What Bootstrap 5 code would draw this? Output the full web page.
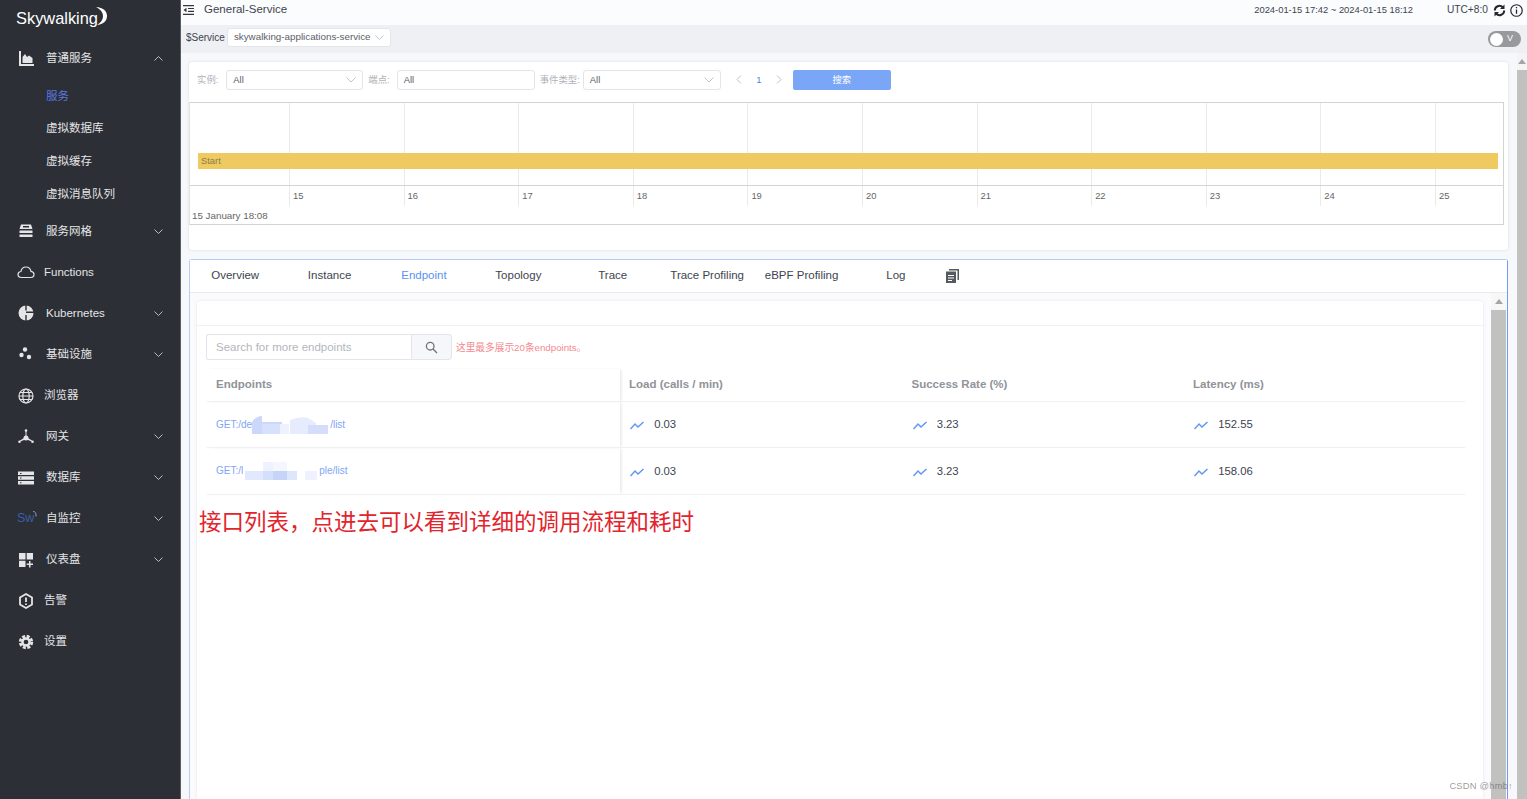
<!DOCTYPE html>
<html lang="zh-CN">
  <head>
    <meta charset="UTF-8" />
    <meta name="viewport" content="width=device-width, initial-scale=1.0" />
    <title>Skywalking</title>
    <link
      href="https://cdn.jsdelivr.net/npm/bootstrap@5.3.0/dist/css/bootstrap.min.css"
      rel="stylesheet"
    />
    <style>
      html, body { height: 100%; overflow: hidden; }
      body {
        font-family: "Liberation Sans", "Noto Sans CJK SC", sans-serif;
        font-size: 12px;
        color: #3d444f;
        background: #f7f8fb;
      }
      .sidebar { width: 181px; flex: none; background: #2c2f35; color: #e4e5e7; border-right: 1px solid #5a5d62; font-size: 11.5px; }
      .logo { height: 38px; padding-left: 16px; font-size: 16.4px; line-height: 36px; color: #fff; white-space: nowrap; }
      .logo svg { vertical-align: top; margin: 7px 0 0 -3px; }
      .menu-item { height: 41.05px; flex: none; padding-left: 18px; padding-right: 17px; color: #e4e5e7; }
      .menu-item .ico { width: 16px; height: 16px; flex: none; margin-right: 12px; }
      .menu-item.leaf { padding-left: 17px; }
      .menu-item.leaf .ico { width: 18px; margin-right: 9px; }
      .menu-item .chev { margin-left: auto; }
      .sub-item { height: 32.7px; flex: none; padding-left: 46px; color: #e4e5e7; }
      .sub-item.active { color: #5a78e0; margin-top: 1px; }
      .sw-ico { color: #3a5ea8; font-size: 12.5px; width: 17px; margin-right: 12px; margin-left: -1px; white-space: nowrap; }
      .sw-ico svg { vertical-align: 5px; margin-left: -1px; }

      .topbar { height: 25px; background: #fbfcfd; padding: 0 4px 5px 2px; color: #3d444f; font-size: 11.5px; }
      .topbar .date { font-size: 9.4px; margin-right: 34px; }
      .topbar .utc { font-size: 10.2px; margin-right: 5px; }
      .title { margin-left: 10px; }
      .toolbar { height: 28px; background: #eef0f3; padding: 0 6px 3px 5px; font-size: 10px; }
      .ms-select { background: #fff; border: 1px solid #e3e5ea; border-radius: 3px; font-size: 9.4px; color: #5b6068; padding: 0 6px; height: 20px; }
      .svc-select { width: 164px; height: 19px; margin-left: 2px; font-size: 9.8px; }
      .switch-v { width: 33px; height: 16px; border-radius: 8px; background: #97999c; color: #fff; font-size: 9px; padding: 0 8px 0 2px; margin-top: 3px; }
      .switch-v i { width: 13px; height: 13px; border-radius: 50%; background: #fff; display: block; }

      .content { padding: 9px 9px 0 8px; min-width: 0; }
      .pane { background: #fff; border: 0; border-radius: 3px; box-shadow: 0 0 3px rgba(0,0,0,.12); }
      .filters { height: 40px; padding: 0 8px 4px; font-size: 9.4px; color: #b0b3b8; }
      .filters .lbl { margin-right: 8px; white-space: nowrap; }
      .filters .lbl.type { margin-left: 5px; margin-right: 3px; }
      .filters .lbl.point { margin-left: 5px; margin-right: 7px; }
      .w-137 { width: 137px; }
      .w-138 { width: 138px; }
      .pager { width: 61px; padding-left: 15px; color: #b8bbc0; font-size: 11px; }
      .pager b { font-weight: 400; color: #4d82ee; font-size: 9.4px; }
      .btn-search { width: 98px; height: 20px; padding: 0; background: #79a6f7; color: #fff; font-size: 9.4px; border: 0; border-radius: 2px; margin-left: 11px; }
      .btn-search:hover { background: #79a6f7; color: #fff; }

      .timeline { position: relative; height: 123px; margin-right: 4px; border: 1px solid #d3d3d3; border-left-color: #e4e4e4; margin-bottom: 25px; font-size: 9.4px; color: #666; }
      .tl-grid { height: 83px; padding-left: 99px; border-bottom: 1px solid #d3d3d3; }
      .tl-grid span, .tl-axis span { width: 114.6px; flex: none; border-left: 1px solid #eaeaea; }
      .tl-axis { height: 20px; padding-left: 99px; }
      .tl-axis span { padding: 3px 0 0 3px; }
      .tl-date { padding: 3px 0 0 2px; font-size: 9.8px; }
      .tl-bar { position: absolute; left: 8px; right: 5px; top: 50px; height: 16px; background: #efca60; color: #8b7c4c; padding-left: 3px; line-height: 15px; }

      .tabs-pane { border: 1px solid #b5cdf8; border-right-color: #6f9cf0; border-bottom: 0; border-radius: 3px 3px 0 0; background: #f8f9fc; margin-top: 9px; min-height: 0; }
      .ms-tabs { height: 33px; background: #fff; border-bottom: 1px solid #e8eaed; flex: none; font-size: 11.5px; padding: 0 0 1px 0; }
      .ms-tabs .nav-item:first-child { margin-left: -2px; }
      .ms-tabs .nav-link { width: 94.4px; padding: 0; text-align: center; color: #3d444f; white-space: nowrap; }
      .ms-tabs .nav-link.active { color: #5b92f3; }
      .tab-icon { margin: 0 0 0 3px; }
      .tab-body { padding: 8px 7px 0 7px; min-height: 0; background: #fbfbfd; }
      .inner { width: 1286px; flex: none; background: #fff; border-radius: 3px 3px 0 0; box-shadow: 0 0 3px rgba(0,0,0,.1); }
      .inner-head { height: 25px; flex: none; border-bottom: 1px solid #eef0f2; }
      .search-row { padding: 8px 0 0 9px; height: 43px; flex: none; }
      .search-box { width: 205px; height: 26px; border: 1px solid #e3e5ea; border-right: 0; border-radius: 3px 0 0 3px; padding: 0 9px; color: #b3b6bc; font-size: 11.5px; line-height: 24px; background: #fff; white-space: nowrap; }
      .search-btn { width: 41px; height: 26px; border: 1px solid #e3e5ea; border-radius: 0 3px 3px 0; background: #f5f7fa; }
      .search-tip { color: #f48a8f; font-size: 9.7px; margin-left: 4px; line-height: 28px; }

      .ep-table { margin: 0 0 0 10px; width: 1258px; table-layout: fixed; font-size: 11.3px; color: #3d444f; }
      .ep-table th, .ep-table td { padding: 0 9px; vertical-align: middle; border-bottom: 1px solid #eef0f2; background: transparent; box-shadow: none; }
      .ep-table th { height: 32.5px; color: #909399; font-weight: 700; font-size: 11.5px; }
      .ep-table td { height: 46.4px; }
      .ep-table .first { width: 413px; box-shadow: 2px 0 3px -1px rgba(0,0,0,.12); }
      .ep-table .col-load { width: 282.5px; }
      .ep-table .col-rate { width: 281.5px; }
      .ep-link { color: #7fa5f6; font-size: 10px; white-space: nowrap; }
      .ep-link svg { vertical-align: middle; }
      .val svg { margin: 0 7px 0 1px; vertical-align: -2px; }
      .note { color: #e2242c; font-size: 22.5px; line-height: 30px; margin: 10px 0 0 2px; font-family: "Noto Sans CJK SC", sans-serif; white-space: nowrap; }

      .bar-inner { width: 15px; flex: none; margin: -8px 0 0 8px; background: #f1f1f1; }
      .bar-arrow { height: 17px; background: #f7f7f8; padding-top: 6px; flex: none; }
      .bar-thumb { background: #c1c1c0; }
      .bar-outer { width: 10px; flex: none; background: #f3f4f6; }
      .bar-outer .bar-arrow { background: #f3f4f6; }
      .tri { width: 0; height: 0; margin: 0 auto; border-left: 4px solid transparent; border-right: 4px solid transparent; border-bottom: 5px solid #a5a5a5; }
      .watermark { position: absolute; right: 14px; bottom: 6px; font-size: 9.4px; color: rgba(90,90,90,.62); letter-spacing: .2px; }
    </style>
  </head>
  <body class="d-flex position-relative">
    <aside class="sidebar d-flex flex-column">
      <div class="logo">Skywalking<svg width="12" height="18" viewBox="0 0 12 18"><path d="M1 0c7 .5 11 4 11 9s-4 8.500-10 9c3.500-2 6-5 6-9S5 2 1 0z" fill="#fff"/></svg></div>

      <div class="menu-item d-flex align-items-center">
        <svg class="ico" viewBox="0 0 16 16" fill="#e4e5e7"><path d="M1 0h2v13h13v2H1z"/><path d="M4.500 12V6l2.500-3 2 3 2-1.500 3.500 2.500V12z"/></svg>
        <span>普通服务</span>
        <svg class="chev" width="9" height="5" viewBox="0 0 9 5" fill="none" stroke="#b9bbbe"><path d="M.5 4.500l4-4 4 4"/></svg>
      </div>
      <div class="sub-item active d-flex align-items-center">服务</div>
      <div class="sub-item d-flex align-items-center">虚拟数据库</div>
      <div class="sub-item d-flex align-items-center">虚拟缓存</div>
      <div class="sub-item d-flex align-items-center">虚拟消息队列</div>

      <div class="menu-item d-flex align-items-center">
        <svg class="ico" viewBox="0 0 16 16" fill="#e4e5e7"><path d="M3 1.500h10l1.500 4.500h-13zM5 3v1.500h6V3z" fill-rule="evenodd"/><path d="M1.500 7.500h13v2.500h-13zM1.500 11.500h13V14h-13z"/></svg>
        <span>服务网格</span>
        <svg class="chev" width="9" height="5" viewBox="0 0 9 5" fill="none" stroke="#b9bbbe"><path d="M.5.500l4 4 4-4"/></svg>
      </div>

      <div class="menu-item leaf d-flex align-items-center">
        <svg class="ico" viewBox="0 0 18 16" fill="none" stroke="#e4e5e7" stroke-width="1.200"><path d="M4.500 13.500C2.500 13.500 1 12.200 1 10.500c0-1.600 1.300-2.800 2.900-3C4.400 5 6.500 3 9 3s4.500 1.800 5 4.400c1.700.2 3 1.500 3 3.100 0 1.700-1.500 3-3.500 3z"/></svg>
        <span>Functions</span>
      </div>

      <div class="menu-item d-flex align-items-center">
        <svg class="ico" viewBox="0 0 16 16"><circle cx="8" cy="8" r="7.500" fill="#e4e5e7"/><path d="M7.300 0v5.500h1.400V0zM8 6.500h8V8H8zM7.300 10v6h1.400v-6z" fill="#2c2f35"/></svg>
        <span>Kubernetes</span>
        <svg class="chev" width="9" height="5" viewBox="0 0 9 5" fill="none" stroke="#b9bbbe"><path d="M.5.500l4 4 4-4"/></svg>
      </div>

      <div class="menu-item d-flex align-items-center">
        <svg class="ico" viewBox="0 0 16 16" fill="#e4e5e7"><circle cx="7" cy="3.500" r="2.200"/><circle cx="3.500" cy="9" r="2.200"/><circle cx="11" cy="11" r="2.200"/></svg>
        <span>基础设施</span>
        <svg class="chev" width="9" height="5" viewBox="0 0 9 5" fill="none" stroke="#b9bbbe"><path d="M.5.500l4 4 4-4"/></svg>
      </div>

      <div class="menu-item leaf d-flex align-items-center">
        <svg class="ico" viewBox="0 0 16 16" fill="none" stroke="#e4e5e7" stroke-width="1.200"><circle cx="8" cy="8" r="7"/><ellipse cx="8" cy="8" rx="3.200" ry="7"/><path d="M1 8h14M1.800 4.500h12.400M1.800 11.500h12.400"/></svg>
        <span>浏览器</span>
      </div>

      <div class="menu-item d-flex align-items-center">
        <svg class="ico" viewBox="0 0 16 16" fill="#e4e5e7"><path d="M7.500 2h1v5l1.500 2 4 2.500-.5 1L10 11H6l-3.500 1.500-.5-1L6 9l1.500-2z"/><circle cx="8" cy="1.500" r="1.300"/><circle cx="1.500" cy="12.800" r="1.300"/><circle cx="14.500" cy="12.800" r="1.300"/><circle cx="8" cy="9" r="2.500"/></svg>
        <span>网关</span>
        <svg class="chev" width="9" height="5" viewBox="0 0 9 5" fill="none" stroke="#b9bbbe"><path d="M.5.500l4 4 4-4"/></svg>
      </div>

      <div class="menu-item d-flex align-items-center">
        <svg class="ico" viewBox="0 0 16 16"><path d="M0 1.500h16v3.600H0zM0 6.200h16v3.600H0zM0 10.900h16v3.600H0z" fill="#e4e5e7"/><path d="M2 3h1.500v1H2zM2 7.500h1.500v1H2zM2 12.200h1.500v1H2z" fill="#2c2f35"/></svg>
        <span>数据库</span>
        <svg class="chev" width="9" height="5" viewBox="0 0 9 5" fill="none" stroke="#b9bbbe"><path d="M.5.500l4 4 4-4"/></svg>
      </div>

      <div class="menu-item d-flex align-items-center">
        <span class="sw-ico">Sw<svg width="4" height="6" viewBox="0 0 4 6" fill="none" stroke="#8f9fc4"><path d="M0 .5c2 0 3.500 1.500 3 5"/></svg></span>
        <span>自监控</span>
        <svg class="chev" width="9" height="5" viewBox="0 0 9 5" fill="none" stroke="#b9bbbe"><path d="M.5.500l4 4 4-4"/></svg>
      </div>

      <div class="menu-item d-flex align-items-center">
        <svg class="ico" viewBox="0 0 16 16" fill="#e4e5e7"><path d="M1 1h6.500v6.500H1zM8.700 1h6.300v6.500H8.700zM1 8.700h6.500V15H1zM11 9h1.500v2.500H15V13h-2.500v2.500H11V13H8.700v-1.500H11z"/></svg>
        <span>仪表盘</span>
        <svg class="chev" width="9" height="5" viewBox="0 0 9 5" fill="none" stroke="#b9bbbe"><path d="M.5.500l4 4 4-4"/></svg>
      </div>

      <div class="menu-item leaf d-flex align-items-center">
        <svg class="ico" viewBox="0 0 18 16" fill="none" stroke="#e4e5e7" stroke-width="1.800"><path d="M9 1l6 3.400v7.200L9 15l-6-3.400V4.400z"/><path d="M9 4.500v4.500M9 10.500v1.500"/></svg>
        <span>告警</span>
      </div>

      <div class="menu-item leaf d-flex align-items-center">
        <svg class="ico" viewBox="0 0 16 16" fill="none" stroke="#e4e5e7"><circle cx="8" cy="8" r="5.800" stroke-width="2.800" stroke-dasharray="3 1.550"/><circle cx="8" cy="8" r="3.600" stroke-width="2.500"/></svg>
        <span>设置</span>
      </div>
    </aside>

    <main class="flex-grow-1 d-flex flex-column" style="min-width:0">
      <div class="topbar d-flex align-items-center flex-none">
        <svg width="11" height="10" viewBox="0 0 11 10" fill="#33373d"><path d="M0 0h11v1.200H0zM5 2.900h6v1.200H5zM5 5.800h6V7H5zM0 8.700h11V10H0zM3.500 2.800v4.400L.5 5z"/></svg>
        <span class="title">General-Service</span>
        <span class="date ms-auto">2024-01-15 17:42 ~ 2024-01-15 18:12</span>
        <span class="utc">UTC+8:0</span>
        <svg class="me-1" width="13" height="13" viewBox="0 0 13 13" fill="none" stroke="#23262b" stroke-width="2"><path d="M1.800 6.500A4.700 4.700 0 0 1 9.800 3.200M11.200 6.500A4.700 4.700 0 0 1 3.200 9.800"/><path d="M11.500.5v4.500H7z" fill="#23262b" stroke="none"/><path d="M1.500 12.500V8h4.500z" fill="#23262b" stroke="none"/></svg>
        <svg width="13" height="13" viewBox="0 0 12 12" fill="none" stroke="#23262b"><circle cx="6" cy="6" r="5.300" stroke-width="1.100"/><path d="M6 5v4M6 2.800v1.200" stroke-width="1.200"/></svg>
      </div>
      <div class="toolbar d-flex align-items-center">
        <span>$Service</span>
        <div class="ms-select svc-select d-flex align-items-center">
          <span>skywalking-applications-service</span>
          <svg class="ms-1" width="9" height="5" viewBox="0 0 9 5" fill="none" stroke="#c0c4cc"><path d="M.5.500l4 4 4-4"/></svg>
        </div>
        <div class="switch-v ms-auto d-flex align-items-center justify-content-between"><i></i><span>V</span></div>
      </div>

      <div class="flex-grow-1 d-flex position-relative" style="min-height:0">
        <div class="content flex-grow-1 d-flex flex-column">
          <div class="pane flex-none">
            <div class="filters d-flex align-items-center">
              <span class="lbl">实例:</span>
              <div class="ms-select w-137 d-flex align-items-center justify-content-between">
                <span>All</span>
                <svg width="10" height="6" viewBox="0 0 10 6" fill="none" stroke="#c0c4cc"><path d="M.5.500l4.500 4.500 4.500-4.500"/></svg>
              </div>
              <span class="lbl point">端点:</span>
              <div class="ms-select w-138 d-flex align-items-center"><span>All</span></div>
              <span class="lbl type">事件类型:</span>
              <div class="ms-select w-138 d-flex align-items-center justify-content-between">
                <span>All</span>
                <svg width="10" height="6" viewBox="0 0 10 6" fill="none" stroke="#c0c4cc"><path d="M.5.500l4.500 4.500 4.500-4.500"/></svg>
              </div>
              <div class="pager d-flex align-items-center justify-content-between">
                <svg width="6" height="9" viewBox="0 0 6 9" fill="none" stroke="#bcbfc4"><path d="M5 .5l-4 4 4 4"/></svg>
                <b>1</b>
                <svg width="6" height="9" viewBox="0 0 6 9" fill="none" stroke="#bcbfc4"><path d="M1 .5l4 4-4 4"/></svg>
              </div>
              <button type="button" class="btn btn-search">搜索</button>
            </div>
            <div class="timeline">
              <div class="tl-grid d-flex">
                <span></span><span></span><span></span><span></span><span></span><span></span><span></span><span></span><span></span><span></span><span></span>
              </div>
              <div class="tl-axis d-flex">
                <span>15</span><span>16</span><span>17</span><span>18</span><span>19</span><span>20</span><span>21</span><span>22</span><span>23</span><span>24</span><span>25</span>
              </div>
              <div class="tl-date">15 January 18:08</div>
              <div class="tl-bar">Start</div>
            </div>
          </div>

          <div class="tabs-pane flex-grow-1 d-flex flex-column">
            <ul class="nav ms-tabs align-items-center">
              <li class="nav-item"><a class="nav-link" href="#">Overview</a></li>
              <li class="nav-item"><a class="nav-link" href="#">Instance</a></li>
              <li class="nav-item"><a class="nav-link active" href="#">Endpoint</a></li>
              <li class="nav-item"><a class="nav-link" href="#">Topology</a></li>
              <li class="nav-item"><a class="nav-link" href="#">Trace</a></li>
              <li class="nav-item"><a class="nav-link" href="#">Trace Profiling</a></li>
              <li class="nav-item"><a class="nav-link" href="#">eBPF Profiling</a></li>
              <li class="nav-item"><a class="nav-link" href="#">Log</a></li>
              <li class="nav-item tab-icon d-flex">
                <svg width="13" height="14" viewBox="0 0 13 14"><path d="M3 0h10v11h-1.500V1.500H3z" fill="#555a61"/><path d="M0 2.500h10V14H0z" fill="#555a61"/><path d="M2 6h6v1H2zM2 8.500h6v1H2zM2 11h4v1H2z" fill="#fff"/></svg>
              </li>
            </ul>
            <div class="tab-body flex-grow-1 d-flex">
              <div class="inner d-flex flex-column">
                <div class="inner-head"></div>
                <div class="search-row d-flex align-items-start">
                  <div class="search-box">Search for more endpoints</div>
                  <div class="search-btn d-flex align-items-center justify-content-center">
                    <svg width="13" height="13" viewBox="0 0 13 13" fill="none" stroke="#6d7178" stroke-width="1.300"><circle cx="5.200" cy="5.200" r="3.800"/><path d="M8 8l4 4"/></svg>
                  </div>
                  <span class="search-tip">这里最多展示20条endpoints。</span>
                </div>
                <table class="table ep-table">
                  <thead>
                    <tr>
                      <th class="first">Endpoints</th>
                      <th class="col-load">Load (calls / min)</th>
                      <th class="col-rate">Success Rate (%)</th>
                      <th>Latency (ms)</th>
                    </tr>
                  </thead>
                  <tbody>
                    <tr>
                      <td class="first"><span class="ep-link">GET:/de<svg width="78" height="18" viewBox="0 0 78 18"><rect width="78" height="18" fill="#fff"/><path d="M0 6q4-6 10-6v6h20V18H0z" fill="#cbd7fb"/><rect x="10" y="8" width="18" height="10" fill="#d8e1fc"/><rect x="28" y="8" width="9" height="10" fill="#eef1fe"/><path d="M38 4q10-4 18-2l8 5v11H38z" fill="#e6ecfe"/><rect x="56" y="9" width="20" height="9" fill="#d6dcfb"/></svg>/list</span></td>
                      <td class="val"><svg width="14" height="9" viewBox="0 0 14 9" fill="none" stroke="#6296f3" stroke-width="1.500"><path d="M.5 8L5 3l3 3 5.500-5"/></svg> 0.03</td>
                      <td class="val"><svg width="14" height="9" viewBox="0 0 14 9" fill="none" stroke="#6296f3" stroke-width="1.500"><path d="M.5 8L5 3l3 3 5.500-5"/></svg> 3.23</td>
                      <td class="val"><svg width="14" height="9" viewBox="0 0 14 9" fill="none" stroke="#6296f3" stroke-width="1.500"><path d="M.5 8L5 3l3 3 5.500-5"/></svg> 152.55</td>
                    </tr>
                    <tr>
                      <td class="first"><span class="ep-link">GET:/l<svg width="76" height="18" viewBox="0 0 76 18"><rect width="76" height="18" fill="#fff"/><rect x="2" y="9" width="18" height="9" fill="#e2e8fd"/><rect x="20" y="9" width="10" height="9" fill="#d4dffb"/><rect x="20" y="0" width="10" height="9" fill="#eef2fe"/><rect x="30" y="0" width="14" height="9" fill="#f5f7fe"/><rect x="30" y="9" width="14" height="9" fill="#c6d4fa"/><rect x="44" y="9" width="10" height="9" fill="#dce6fc"/><rect x="62" y="9" width="12" height="9" fill="#eff1fe"/></svg>ple/list</span></td>
                      <td class="val"><svg width="14" height="9" viewBox="0 0 14 9" fill="none" stroke="#6296f3" stroke-width="1.500"><path d="M.5 8L5 3l3 3 5.500-5"/></svg> 0.03</td>
                      <td class="val"><svg width="14" height="9" viewBox="0 0 14 9" fill="none" stroke="#6296f3" stroke-width="1.500"><path d="M.5 8L5 3l3 3 5.500-5"/></svg> 3.23</td>
                      <td class="val"><svg width="14" height="9" viewBox="0 0 14 9" fill="none" stroke="#6296f3" stroke-width="1.500"><path d="M.5 8L5 3l3 3 5.500-5"/></svg> 158.06</td>
                    </tr>
                  </tbody>
                </table>
                <div class="note">接口列表，点进去可以看到详细的调用流程和耗时</div>
              </div>
              <div class="bar-inner d-flex flex-column">
                <div class="bar-arrow"><div class="tri"></div></div>
                <div class="bar-thumb flex-grow-1"></div>
              </div>
            </div>
          </div>
        </div>
        <div class="bar-outer d-flex flex-column">
          <div class="bar-arrow"><div class="tri"></div></div>
          <div class="bar-thumb flex-grow-1"></div>
        </div>
      </div>
    </main>
    <div class="watermark">CSDN @hmb↑</div>
  </body>
</html>
